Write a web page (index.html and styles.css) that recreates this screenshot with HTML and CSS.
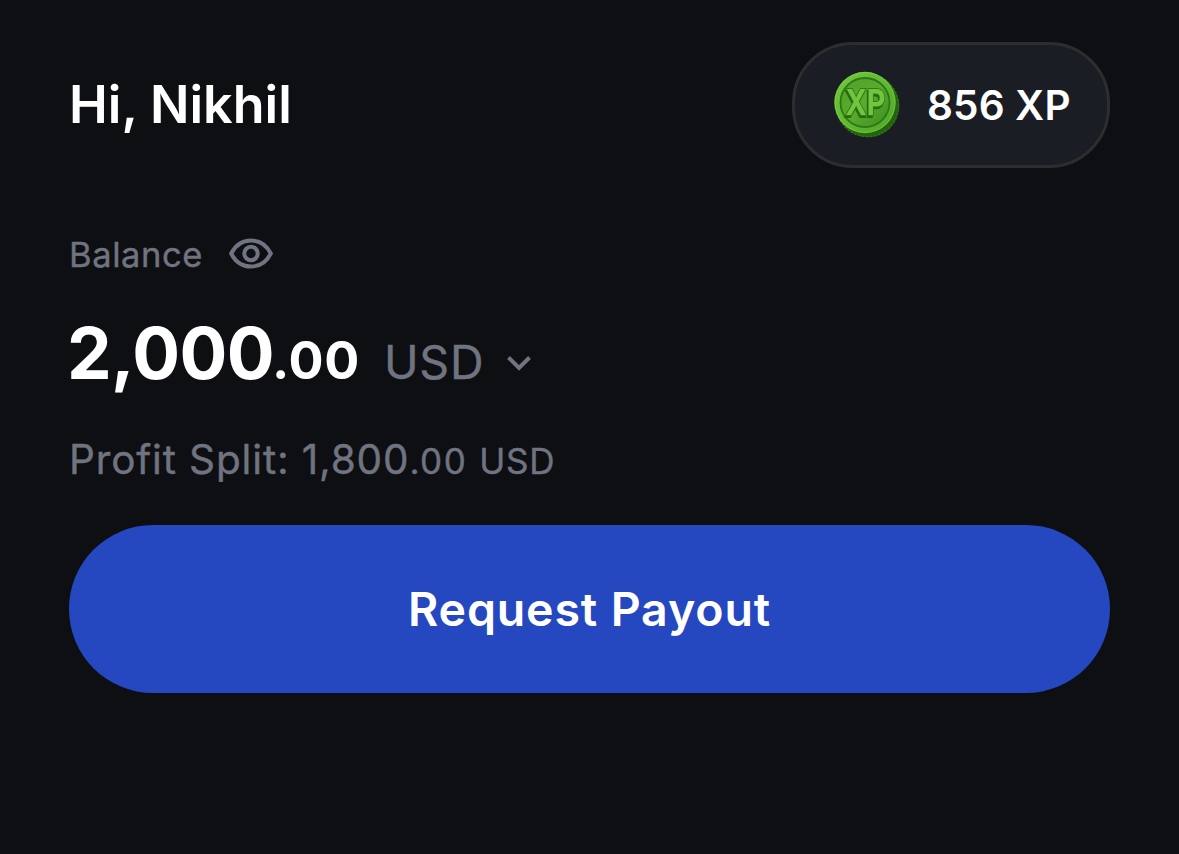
FILE: index.html
```html
<!DOCTYPE html>
<html lang="en">
<head>
<meta charset="utf-8">
<title>Balance</title>
<link rel="stylesheet" href="styles.css">
</head>
<body>
<main class="wallet">
  <header class="header">
    <h1 class="greeting">Hi, Nikhil</h1>
    <div class="xp">
      <svg class="coin" viewBox="0 0 68 68" aria-hidden="true">
        <defs>
          <linearGradient id="rim" x1="0" y1="0" x2="1" y2="1">
            <stop offset="0" stop-color="#72ca3d"/><stop offset="1" stop-color="#4fa628"/>
          </linearGradient>
          <linearGradient id="face" x1="0" y1="0" x2="1" y2="1">
            <stop offset="0" stop-color="#4fa128"/><stop offset=".5" stop-color="#5aaa2e"/><stop offset="1" stop-color="#3c8f20"/>
          </linearGradient>
        </defs>
        <circle cx="34" cy="35" r="31.3" fill="#23620f"/>
        <circle cx="33.500" cy="34.500" r="31" fill="none" stroke="#2f7416" stroke-width="1.5" stroke-dasharray="2 2"/>
        <circle cx="31" cy="31.500" r="30.700" fill="url(#rim)"/>
        <circle cx="31" cy="31.500" r="30" fill="none" stroke="#8cdd50" stroke-width="1" opacity=".45"/>
        <circle cx="31" cy="31.500" r="24.500" fill="url(#face)" stroke="#2d7816" stroke-width="1.8"/>
        <text class="coin-text" x="11.500" y="44" textLength="40" lengthAdjust="spacingAndGlyphs">XP</text>
      </svg>
      <span class="xp-value">856 XP</span>
    </div>
  </header>
  <section class="balance">
    <div class="label-row">
      <span class="label">Balance</span>
      <svg class="eye" viewBox="0 0 44 32" aria-hidden="true">
        <path d="M2.200 15.500C6.500 7 13.500 2.500 22 2.500S37.500 7 41.800 15.500C37.500 24 30.500 28.500 22 28.500S6.500 24 2.200 15.500Z"/>
        <circle cx="22" cy="15.500" r="6.700"/>
      </svg>
    </div>
    <div class="amount-row">
      <span class="amount">2,000</span><span class="cents">.00</span><span class="currency">USD</span>
      <svg class="chevron" viewBox="0 0 24 16" aria-hidden="true"><path d="M1.500 2.500 12 13 22.500 2.500"/></svg>
    </div>
    <div class="split"><span class="split-main">Profit Split: 1,800</span><span class="split-cents">.00</span><span class="split-currency">USD</span></div>
  </section>
  <button class="payout" type="button">Request Payout</button>
</main>
</body>
</html>
```
FILE: styles.css
```css
* { box-sizing: border-box; }
body {
  margin: 0;
  background: #0e0f12;
  color: #fff;
  font-family: Inter, "Liberation Sans", sans-serif;
}
.wallet {
  height: 854px;
  padding: 42px 69px 0;
  overflow: hidden;
}
.header {
  display: flex;
  justify-content: space-between;
  align-items: center;
  height: 126px;
}
.greeting {
  margin: 0;
  font-size: 52px;
  font-weight: 600;
  line-height: 64px;
}
.xp {
  display: flex;
  align-items: center;
  width: 318px;
  height: 126px;
  padding-left: 39px;
  border: 3px solid #2d2d2f;
  border-radius: 61px;
  background: #1b1d25;
}
.coin { width: 68px; height: 68px; }
.coin-text {
  font-size: 36px;
  font-weight: 700;
  fill: #72c53e;
  stroke: #317c18;
  stroke-width: 2px;
  paint-order: stroke;
  filter: drop-shadow(-1px 2px 0 #28690f);
}
.xp-value {
  margin: 1px 0 0 25px;
  font-size: 40.500px;
  font-weight: 600;
  letter-spacing: 0.150px;
  white-space: nowrap;
}
.label-row {
  display: flex;
  align-items: center;
  height: 44px;
  margin-top: 64px;
}
.label {
  width: 160px;
  color: #6f7480;
  font-size: 34.500px;
  letter-spacing: 0.600px;
}
.label, .currency, .split { -webkit-text-stroke: 0.400px #6f7480; }
.eye { width: 44px; height: 32px; }
.eye, .chevron { fill: none; stroke: #6f7480; stroke-width: 4; }
.amount-row {
  display: flex;
  align-items: baseline;
  height: 84px;
  margin-top: 35px;
  line-height: 84px;
}
.amount {
  margin-left: -2px;
  font-size: 71px;
  font-weight: 700;
  letter-spacing: -0.600px;
}
.cents {
  margin-left: -2px;
  font-size: 52px;
  font-weight: 700;
  letter-spacing: 0.700px;
}
.currency {
  margin-left: 24px;
  color: #6f7480;
  font-size: 46.500px;
  letter-spacing: 0.700px;
}
.chevron {
  align-self: center;
  width: 24px;
  height: 16px;
  margin: 20px 0 0 23px;
}
.split {
  display: flex;
  align-items: baseline;
  height: 50px;
  margin-top: 40px;
  color: #6f7480;
  line-height: 50px;
}
.split-main { font-size: 40.500px; letter-spacing: 0.850px; }
.split-cents, .split-currency { font-size: 35px; letter-spacing: 0.700px; }
.split-cents { letter-spacing: 1.500px; }
.split-currency { margin-left: 12px; }
.payout {
  display: block;
  width: 1041px;
  height: 168px;
  margin-top: 40px;
  padding: 0;
  border: 0;
  border-radius: 84px;
  background: #2547bf;
  color: #fff;
  font: 600 46.500px/60px Inter, "Liberation Sans", sans-serif;
  letter-spacing: 0.850px;
}
```
